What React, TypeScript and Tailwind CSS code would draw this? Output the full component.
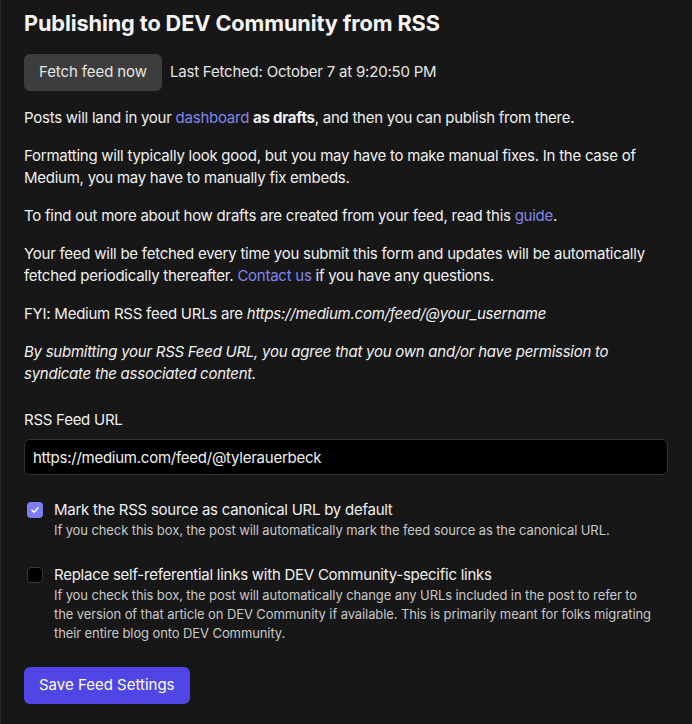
export default function App() {
  return (
    <main
      className="min-h-screen bg-[#171717] border-l border-[#2a2a2a] text-[#f5f5f5] pl-[23px] pr-6 pt-2 pb-6 tracking-[-0.25px]"
      style={{ fontFamily: "Inter, 'Noto Sans', sans-serif" }}
    >
      <h1 className="text-[21.7px] font-bold leading-[30px] tracking-[-0.1px] text-[#f5f5f5]">
        Publishing to DEV Community from RSS
      </h1>

      <div className="mt-4 flex items-center gap-2">
        <button className="h-[37px] px-[15px] rounded-md bg-[#3d3d3d] text-[15px] tracking-[-0.1px] text-[#e5e5e5]">
          Fetch feed now
        </button>
        <span className="text-[15px] tracking-[-0.2px] text-[#e5e5e5]">
          Last Fetched: October 7 at 9:20:50 PM
        </span>
      </div>

      <div className="mt-4 flex flex-col gap-4 text-[15px] leading-[22px] text-[#f0f0f0]">
        <p>
          Posts will land in your{" "}
          <a className="text-[#8185ec]">dashboard</a>{" "}
          <strong className="font-bold">as drafts</strong>, and then you can
          publish from there.
        </p>
        <p>
          Formatting will typically look good, but you may have to make manual
          fixes. In the case of Medium, you may have to manually fix embeds.
        </p>
        <p>
          To find out more about how drafts are created from your feed, read
          this <a className="text-[#8185ec]">guide</a>.
        </p>
        <p>
          Your feed will be fetched every time you submit this form and updates
          will be automatically fetched periodically thereafter.{" "}
          <a className="text-[#8185ec]">Contact us</a> if you have any
          questions.
        </p>
        <p>
          FYI: Medium RSS feed URLs are{" "}
          <em>https://medium.com/feed/@your_username</em>
        </p>
        <p className="italic">
          By submitting your RSS Feed URL, you agree that you own and/or have
          permission to syndicate the associated content.
        </p>
      </div>

      <div className="mt-6">
        <label className="block text-[15px] leading-[22px] text-[#f0f0f0]">
          RSS Feed URL
        </label>
        <input
          className="mt-2 w-full h-[36px] rounded-md bg-black border border-[#333] px-2 text-[15px] tracking-[-0.25px] text-[#f0f0f0] outline-none"
          defaultValue="https://medium.com/feed/@tylerauerbeck"
        />
      </div>

      <div className="mt-6 flex gap-[11px]">
        <span className="mt-[3px] ml-[3px] w-4 h-4 shrink-0 rounded-[4px] bg-[#7b7ff2] flex items-center justify-center">
          <svg width="10" height="10" viewBox="0 0 10 10" fill="none">
            <path d="M2 5.2 L4.1 7.3 L8 2.8" stroke="white" strokeWidth="1.5" strokeLinecap="round" strokeLinejoin="round" />
          </svg>
        </span>
        <div>
          <div className="text-[15px] leading-[22px] text-[#f0f0f0]">
            Mark the RSS source as canonical URL by default
          </div>
          <div className="text-[13px] leading-[19px] tracking-[-0.1px] text-[#c8c8c8]">
            If you check this box, the post will automatically mark the feed
            source as the canonical URL.
          </div>
        </div>
      </div>

      <div className="mt-6 flex gap-[11px]">
        <span className="mt-[3px] ml-[3px] w-4 h-4 shrink-0 rounded-[4px] bg-black border border-[#3a3a3a]" />
        <div>
          <div className="text-[15px] leading-[22px] text-[#f0f0f0]">
            Replace self-referential links with DEV Community-specific links
          </div>
          <div className="text-[13px] leading-[19px] tracking-[-0.1px] text-[#c8c8c8]">
            If you check this box, the post will automatically change any URLs
            included in the post to refer to
            <br />
            the version of that article on DEV Community if available. This is
            primarily meant for folks migrating
            <br />
            their entire blog onto DEV Community.
          </div>
        </div>
      </div>

      <button className="mt-6 h-[37px] px-[15px] rounded-md bg-[#4f46e5] text-[15px] tracking-normal text-white">
        Save Feed Settings
      </button>
    </main>
  );
}
